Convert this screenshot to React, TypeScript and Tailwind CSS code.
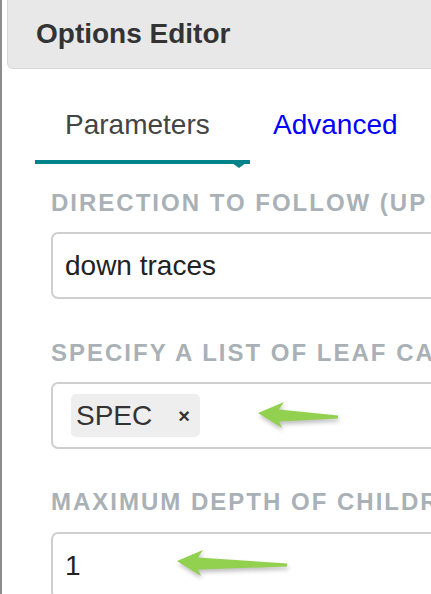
import React from "react";

const labelCls =
  "whitespace-nowrap text-[24px] font-bold uppercase leading-[24px] tracking-[2px] text-[#a9b1b6]";
const inputCls =
  "flex h-[67px] w-[520px] items-center rounded-[7px] border-2 border-[#cfcfcf] bg-white text-[28px] leading-[28px] text-[#222]";

const Arrow = ({ className, len }: { className: string; len: number }) => (
  <svg
    className={className}
    width={len + 10}
    height={36}
    viewBox={`0 0 ${len + 10} 36`}
    style={{ filter: "drop-shadow(1px 3px 2px rgba(0,0,0,0.25))" }}
  >
    <polygon
      points={`2,12 28,1 23,8.5 ${len},14.5 ${len},17.5 23,20.5 26,27`}
      fill="#92d050"
    />
  </svg>
);

const App = () => {
  return (
    <div className="relative flex h-[594px] w-[431px] overflow-hidden bg-white font-['Liberation_Sans',Arial,sans-serif]">
      <div className="w-[2px] shrink-0 bg-[#8c8c8c]" />
      <div className="w-[600px] shrink-0">
        <div className="ml-[5px] h-[69px] rounded-bl-[6px] border-x border-b border-[#d6d6d6] bg-[#e8e8e8] pl-[28px] pt-[20px]">
          <h3 className="text-[28px] font-bold leading-[28px] text-[#333]">
            Options Editor
          </h3>
        </div>

        <div className="pl-[33px]">
          <div className="mt-[42px] flex items-start text-[28px] leading-[28px]">
            <div className="relative w-[215px] border-b-4 border-[#00838b] pb-[21px] pl-[30px] text-[#444]">
              Parameters
              <span className="absolute right-0 top-full h-0 w-0 border-x-[11px] border-t-[8px] border-x-transparent border-t-[#00838b]" />
            </div>
            <div className="ml-[23px] text-[#0000ff]">Advanced</div>
          </div>

          <div className="ml-[16px]">
            <div className={`mt-[27px] ${labelCls}`}>
              Direction to follow (up or down)
            </div>
            <div className={`mt-[17px] pl-[12px] ${inputCls}`}>
              down traces
            </div>

            <div className={`mt-[42px] ${labelCls}`}>
              Specify a list of leaf cases
            </div>
            <div className={`mt-[17px] pl-[18px] ${inputCls}`}>
              <span className="flex h-[43px] items-center rounded-[5px] bg-[#eeeeee] pl-[5px] pr-[10px] text-[#333]">
                SPEC
                <span className="ml-[26px] text-[20px] font-bold">×</span>
              </span>
            </div>

            <div className={`mt-[41px] ${labelCls}`}>
              Maximum depth of children
            </div>
            <div className={`mt-[18px] pl-[12px] ${inputCls}`}>1</div>
          </div>
        </div>
      </div>

      <Arrow className="absolute left-[256px] top-[401px]" len={82} />
      <Arrow className="absolute left-[175px] top-[549px]" len={112} />
    </div>
  );
};

export default App;
